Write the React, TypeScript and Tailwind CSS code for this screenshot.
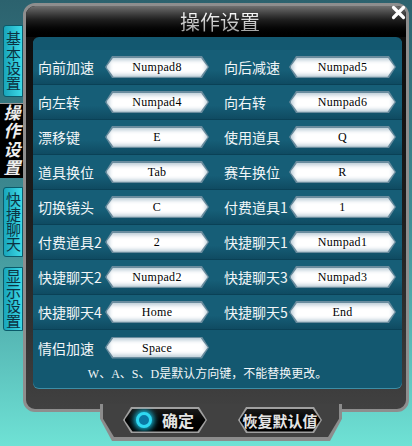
import React from 'react';

// ─── Key bindings shown in the panel ─────────────────────────────────────────

type Row = [string, string, string?, string?];

const ROWS: Row[] = [
  ['向前加速', 'Numpad8', '向后减速', 'Numpad5'],
  ['向左转', 'Numpad4', '向右转', 'Numpad6'],
  ['漂移键', 'E', '使用道具', 'Q'],
  ['道具换位', 'Tab', '赛车换位', 'R'],
  ['切换镜头', 'C', '付费道具1', '1'],
  ['付费道具2', '2', '快捷聊天1', 'Numpad1'],
  ['快捷聊天2', 'Numpad2', '快捷聊天3', 'Numpad3'],
  ['快捷聊天4', 'Home', '快捷聊天5', 'End'],
  ['情侣加速', 'Space'],
];

const HEX_BOX = '[clip-path:polygon(7px_0,calc(100%_-_7px)_0,100%_50%,calc(100%_-_7px)_100%,7px_100%,0_50%)]';
const HEX_BTN = '[clip-path:polygon(8px_0,calc(100%_-_8px)_0,100%_50%,calc(100%_-_8px)_100%,8px_100%,0_50%)]';

function KeyBox({ value, w }: { value: string; w: string }) {
  return (
    <div className={`${w} h-[22px] p-[1.5px] bg-[#6a8c9e] ${HEX_BOX}`}>
      <div
        className={`h-full flex items-center justify-center bg-white shadow-[inset_0_0_4px_2px_#b4c8d3] ${HEX_BOX} font-['Liberation_Serif',serif] text-[12px] tracking-[0.3px] text-black`}
      >
        {value}
      </div>
    </div>
  );
}

function Label({ text, w }: { text: string; w: string }) {
  return <span className={`${w} shrink-0 whitespace-nowrap text-[14px] leading-none text-[#f2f6f8]`}>{text}</span>;
}

// ─── Side tabs (vertical text) ───────────────────────────────────────────────

function SideTab({ text, h, mt }: { text: string; h: string; mt: string }) {
  return (
    <div
      className={`${h} ${mt} ml-[3px] w-[20px] rounded-l-[3px] border border-[#0a5a6a] bg-linear-to-r from-[#18a6bc] to-[#3cd9e6] flex items-center justify-center`}
    >
      <span className="[writing-mode:vertical-rl] [text-orientation:upright] whitespace-nowrap text-[15px] leading-[18px] text-[#0c3342]">
        {text}
      </span>
    </div>
  );
}

function ActiveTab() {
  return (
    <div className="h-[75px] mt-[6px] w-[23px] bg-black border-t border-[#9a9a9a] flex items-center justify-center">
      <span className="[writing-mode:vertical-rl] [text-orientation:upright] whitespace-nowrap text-[17px] leading-[22px] tracking-[1.5px] font-bold italic text-[#eeeeee]">
        操作设置
      </span>
    </div>
  );
}

// ─── Bottom buttons ──────────────────────────────────────────────────────────

function HexButton({ children }: { children: React.ReactNode }) {
  return (
    <div className={`w-[84px] h-[26px] p-[1.5px] bg-[#a0a0a0] ${HEX_BTN}`}>
      <div className={`h-full flex items-center justify-center gap-[10px] bg-linear-to-b from-[#1a1a1a] to-black ${HEX_BTN}`}>
        {children}
      </div>
    </div>
  );
}

// ─── Main component ──────────────────────────────────────────────────────────

export default function App() {
  return (
    <div className="w-[412px] h-[446px] overflow-hidden flex bg-linear-to-b from-[#2c626e] via-[#3f8f96] to-[#6fe2d5] font-['Noto_Sans_CJK_SC',sans-serif]">
      {/* Tab strip */}
      <div className="w-[23px] shrink-0 flex flex-col pt-[25px]">
        <SideTab text="基本设置" h="h-[72px]" mt="mt-0" />
        <ActiveTab />
        <SideTab text="快捷聊天" h="h-[70px]" mt="mt-[9px]" />
        <SideTab text="显示设置" h="h-[64px]" mt="mt-[10px]" />
      </div>

      {/* Dialog */}
      <div className="w-[386px] shrink-0 pt-[3px] flex flex-col">
        <div className="relative h-[409px] rounded-[12px] border-[3px] border-[#8e8e8e] bg-linear-to-b from-[#0a0a0a] via-[#1c1c1c] to-[#414141] flex flex-col">
          {/* Title bar */}
          <div className="h-[31px] shrink-0 rounded-t-[9px] bg-linear-to-b from-[#707070] via-[#1e1e1e] via-45% to-black flex items-center justify-center pl-[8px]">
            <span className="text-[20px] leading-none bg-linear-to-b from-white to-[#a0a0a0] bg-clip-text text-transparent">
              操作设置
            </span>
          </div>
          <svg className="absolute right-[0px] top-[-1px]" width="15" height="15" viewBox="0 0 15 15" aria-hidden="true">
            <path d="M2.5 2.5L12.5 12.5M12.5 2.5L2.5 12.5" stroke="#ffffff" strokeWidth="3.2" strokeLinecap="round" />
          </svg>

          {/* Key panel */}
          <div className="ml-[7px] mr-[4px] h-[351px] rounded-[6px] bg-[#135870] pt-[13px] pb-[5px] flex flex-col shadow-[0_1px_0_#3d8ea6]">
            {ROWS.map(([l1, v1, l2, v2], i) => (
              <div
                key={i}
                className={`h-[35px] shrink-0 flex items-center pl-[5px] pr-[6px] ${
                  i < ROWS.length - 1
                    ? 'border-b border-[#0a4156] bg-linear-to-b from-[#165e77] from-60% to-[#0f4b62]'
                    : ''
                }`}
              >
                <Label text={l1} w="w-[67px]" />
                <KeyBox value={v1} w="w-[104px]" />
                {l2 && (
                  <>
                    <span className="w-[15px] shrink-0" />
                    <Label text={l2} w="w-[65px]" />
                    <KeyBox value={v2 ?? ''} w="w-[107px]" />
                  </>
                )}
              </div>
            ))}
            <p className="h-[18px] flex items-center justify-center pr-[20px] text-[12px] text-[#f2f6f8] font-['Liberation_Serif','Noto_Sans_CJK_SC',serif] whitespace-nowrap">
              W、A、S、D是默认方向键，不能替换更改。
            </p>
          </div>
        </div>

        {/* Button tab hanging below the dialog */}
        <div className="-mt-[8px] ml-[77px] w-[242px] h-[37px] flex flex-col px-[3px] pb-[4px] bg-[#8c8c8c] [clip-path:polygon(0_0,100%_0,100%_40%,calc(100%_-_12px)_100%,12px_100%,0_40%)]">
          <div className="flex-1 flex items-start pt-[3px] pl-[20px] gap-[31px] bg-[#414141] [clip-path:polygon(0_0,100%_0,100%_45%,calc(100%_-_11px)_100%,11px_100%,0_45%)]">
            <HexButton>
              <span className="w-[16px] h-[16px] rounded-full border-[3px] border-[#2fd8f2] bg-[#0a78a4] shadow-[0_0_6px_2px_#18c4e6]" />
              <span className="text-[16px] font-bold text-[#e4e4e4] leading-none">确定</span>
            </HexButton>
            <HexButton>
              <span className="text-[15px] font-bold text-[#e4e4e4] leading-none whitespace-nowrap">恢复默认值</span>
            </HexButton>
          </div>
        </div>
      </div>
    </div>
  );
}
